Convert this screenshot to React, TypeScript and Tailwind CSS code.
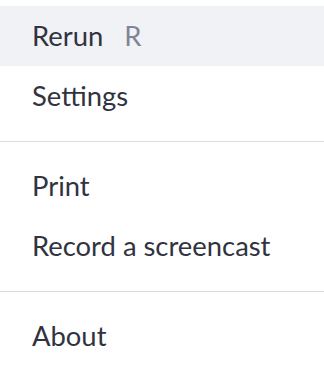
export default function App() {
  const item = "h-[60px] flex items-center px-[32px] text-[27.4px] text-[#31333f]";
  return (
    <div className="w-[324px] h-[378px] bg-white pt-[6px]" style={{ fontFamily: "Lato, 'Noto Sans', sans-serif" }}>
      <div className={item + " bg-[#f0f2f6]"}>
        <span>Rerun</span>
        <span className="ml-[21px] text-[#808495]">R</span>
      </div>
      <div className={item}>Settings</div>
      <div className="h-[30px] flex items-center"><div className="h-[1px] w-full bg-[#dcdcdc]" /></div>
      <div className={item}>Print</div>
      <div className={item}>Record a screencast</div>
      <div className="h-[30px] flex items-center"><div className="h-[1px] w-full bg-[#dcdcdc]" /></div>
      <div className={item}>About</div>
    </div>
  );
}
